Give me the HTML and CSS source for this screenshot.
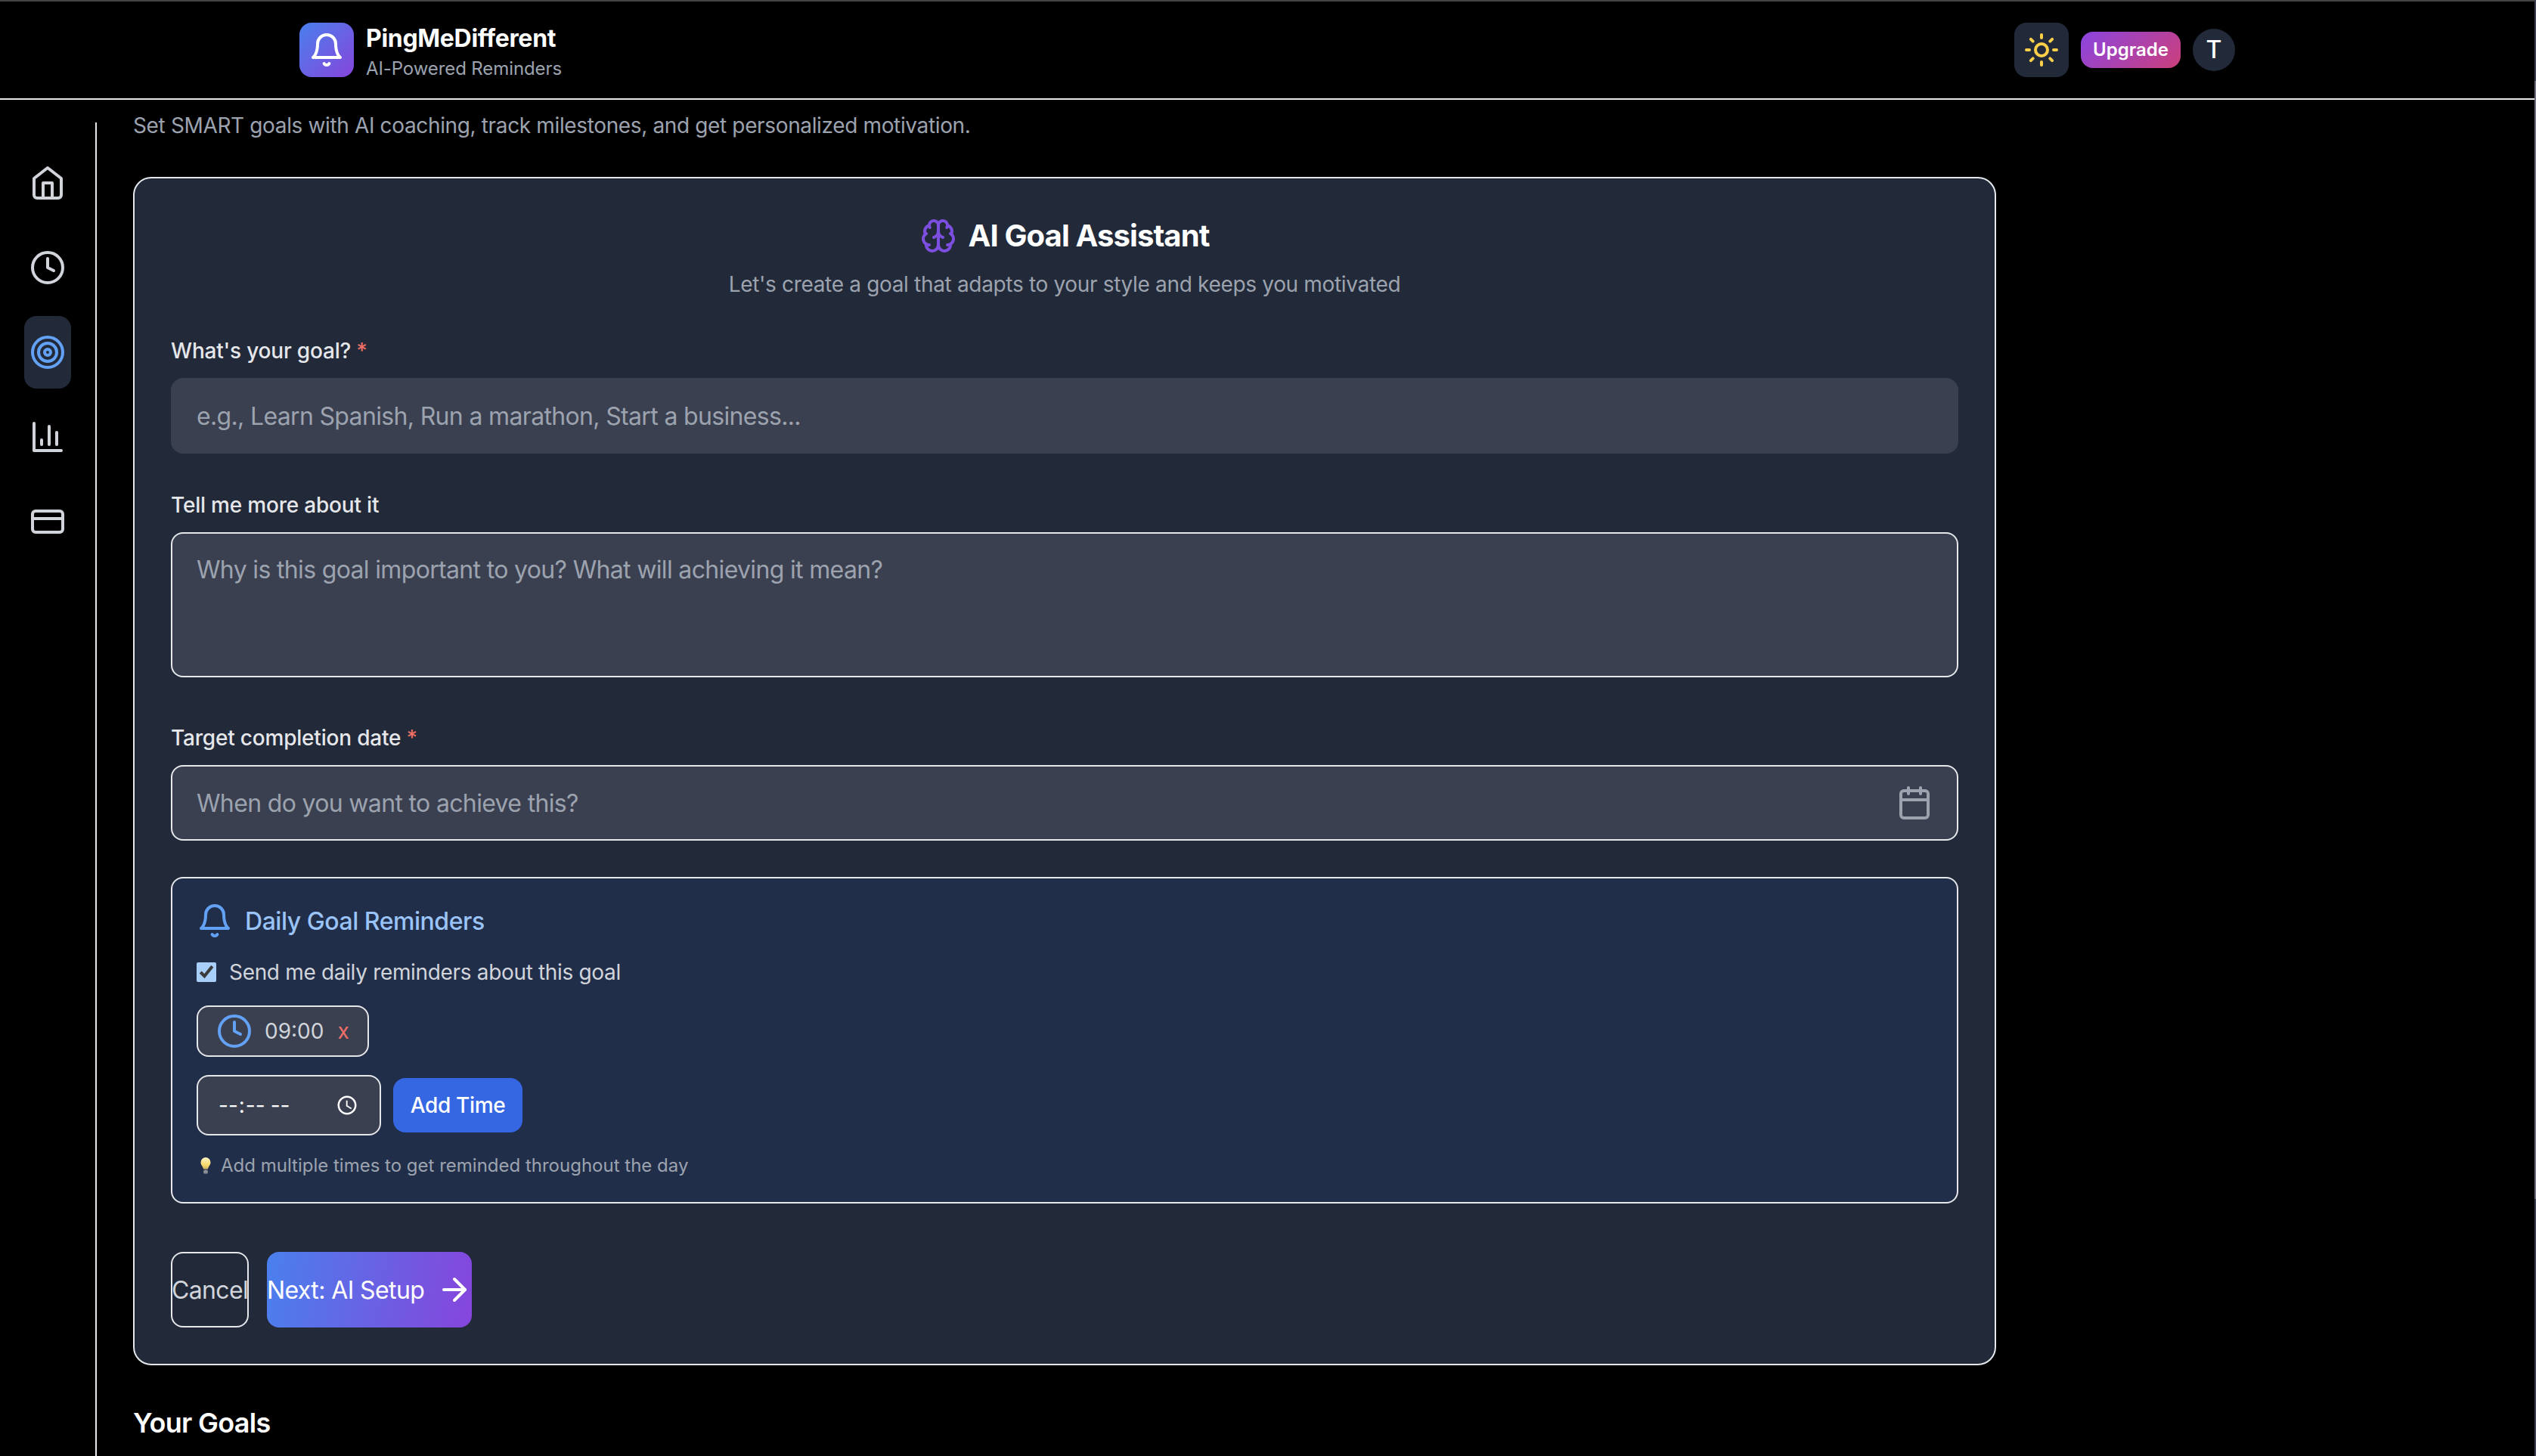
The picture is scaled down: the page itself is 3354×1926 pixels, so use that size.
FILE: index.html
```html
<!DOCTYPE html>
<html lang="en">
<head>
<meta charset="utf-8">
<title>PingMeDifferent</title>
<link rel="stylesheet" href="styles.css">
</head>
<body>
<header class="topbar">
  <div class="topbar-inner">
    <div class="brand">
      <span class="logo"><svg class="ic ic-white" viewBox="0 0 24 24"><path d="M6 8a6 6 0 0 1 12 0c0 7 3 9 3 9H3s3-2 3-9"/><path d="M10.3 21a1.94 1.94 0 0 0 3.4 0"/></svg></span>
      <div class="brand-text">
        <div class="brand-name">PingMeDifferent</div>
        <div class="brand-sub">AI-Powered Reminders</div>
      </div>
    </div>
    <div class="top-actions">
      <span class="theme-btn"><svg class="ic ic-yellow" viewBox="0 0 24 24"><circle cx="12" cy="12" r="4"/><path d="M12 2v2"/><path d="M12 20v2"/><path d="m4.93 4.93 1.41 1.41"/><path d="m17.66 17.66 1.41 1.41"/><path d="M2 12h2"/><path d="M20 12h2"/><path d="m6.34 17.66-1.41 1.41"/><path d="m19.07 4.93-1.41 1.41"/></svg></span>
      <span class="upgrade">Upgrade</span>
      <span class="avatar">T</span>
    </div>
  </div>
</header>
<div class="layout">
  <nav class="sidebar">
    <span class="nav-item"><svg class="ic" viewBox="0 0 24 24"><path d="m3 9 9-7 9 7v11a2 2 0 0 1-2 2H5a2 2 0 0 1-2-2z"/><polyline points="9 22 9 12 15 12 15 22"/></svg></span>
    <span class="nav-item"><svg class="ic" viewBox="0 0 24 24"><circle cx="12" cy="12" r="10"/><polyline points="12 6 12 12 16 14"/></svg></span>
    <span class="nav-item nav-active"><svg class="ic ic-blue" viewBox="0 0 24 24"><circle cx="12" cy="12" r="10"/><circle cx="12" cy="12" r="6"/><circle cx="12" cy="12" r="2"/></svg></span>
    <span class="nav-item"><svg class="ic" viewBox="0 0 24 24"><path d="M3 3v18h18"/><path d="M18 17V9"/><path d="M13 17V5"/><path d="M8 17v-3"/></svg></span>
    <span class="nav-item"><svg class="ic" viewBox="0 0 24 24"><rect x="2" y="5" width="20" height="14" rx="2"/><line x1="2" y1="10" x2="22" y2="10"/></svg></span>
  </nav>
  <main class="main">
    <p class="intro">Set SMART goals with AI coaching, track milestones, and get personalized motivation.</p>
    <section class="card">
      <h2 class="card-title"><svg class="ic ic-purple" viewBox="0 0 24 24"><path d="M12 5a3 3 0 1 0-5.997.125 4 4 0 0 0-2.526 5.77 4 4 0 0 0 .556 6.588A4 4 0 1 0 12 18Z"/><path d="M12 5a3 3 0 1 1 5.997.125 4 4 0 0 1 2.526 5.77 4 4 0 0 1-.556 6.588A4 4 0 1 1 12 18Z"/><path d="M15 13a4.5 4.5 0 0 1-3-4 4.5 4.5 0 0 1-3 4"/><path d="M17.599 6.5a3 3 0 0 0 .399-1.375"/><path d="M6.003 5.125A3 3 0 0 0 6.401 6.5"/><path d="M3.477 10.896a4 4 0 0 1 .585-.396"/><path d="M19.938 10.5a4 4 0 0 1 .585.396"/><path d="M6 18a4 4 0 0 1-1.967-.516"/><path d="M19.967 17.484A4 4 0 0 1 18 18"/></svg>AI Goal Assistant</h2>
      <p class="card-sub">Let's create a goal that adapts to your style and keeps you motivated</p>

      <label class="label">What's your goal? <span class="req">*</span></label>
      <input class="field field-plain" type="text" placeholder="e.g., Learn Spanish, Run a marathon, Start a business...">

      <label class="label">Tell me more about it</label>
      <textarea class="field field-area" placeholder="Why is this goal important to you? What will achieving it mean?"></textarea>

      <label class="label label-date">Target completion date <span class="req">*</span></label>
      <div class="date-wrap">
        <input class="field" type="text" placeholder="When do you want to achieve this?">
        <svg class="ic ic-gray date-icon" viewBox="0 0 24 24"><rect x="3" y="4" width="18" height="18" rx="2"/><path d="M16 2v4"/><path d="M8 2v4"/><path d="M3 10h18"/></svg>
      </div>

      <div class="reminders">
        <div class="rem-title"><svg class="ic ic-blue" viewBox="0 0 24 24"><path d="M6 8a6 6 0 0 1 12 0c0 7 3 9 3 9H3s3-2 3-9"/><path d="M10.3 21a1.94 1.94 0 0 0 3.4 0"/></svg>Daily Goal Reminders</div>
        <label class="rem-check"><input class="check" type="checkbox" checked>Send me daily reminders about this goal</label>
        <div class="chips">
          <span class="chip"><svg class="ic ic-blue" viewBox="0 0 24 24"><circle cx="12" cy="12" r="10"/><polyline points="12 6 12 12 16 14"/></svg><span class="chip-time">09:00</span><span class="chip-x">x</span></span>
        </div>
        <div class="time-row">
          <input class="time-input" type="time">
          <span class="add-time">Add Time</span>
        </div>
        <p class="tip"><svg class="bulb" viewBox="0 0 16 24"><defs><linearGradient id="bulbg" x1="0" y1="0" x2="0" y2="1"><stop offset="0" stop-color="#fff6c2"/><stop offset="0.65" stop-color="#f7d96b"/><stop offset="1" stop-color="#c9b060"/></linearGradient></defs><path d="M8 1a6.5 6.5 0 0 0-6.5 6.5c0 3.6 2.9 5.6 3.6 9h5.8c.7-3.4 3.6-5.4 3.6-9A6.5 6.5 0 0 0 8 1Z" fill="url(#bulbg)"/><rect x="5.2" y="17.5" width="5.6" height="5" rx="1.6" fill="#8d8f96"/></svg>Add multiple times to get reminded throughout the day</p>
      </div>

      <div class="actions">
        <span class="btn-cancel">Cancel</span>
        <span class="btn-next">Next: AI Setup<svg class="ic ic-white" viewBox="0 0 24 24"><path d="M5 12h14"/><path d="m12 5 7 7-7 7"/></svg></span>
      </div>
    </section>
    <h2 class="goals-title">Your Goals</h2>
  </main>
</div>
<div class="scroll-edge"><div class="scroll-thumb"></div></div>
</body>
</html>
```
FILE: styles.css
```css
* { box-sizing: border-box; }
html { margin: 0; padding: 0; height: 1926px; overflow: hidden; background: #000; }
body {
  margin: 0;
  padding: 0;
  background: #000;
  color: #fff;
  font-family: Inter, "Liberation Sans", sans-serif;
  overflow: hidden;
  height: 1926px;
  border-top: 2px solid #444;
}
.ic {
  width: 48px; height: 48px; flex: none; display: block;
  fill: none; stroke: #d1d5db; stroke-width: 2; stroke-linecap: round; stroke-linejoin: round;
}
.ic-white { stroke: #fff; }
.ic-yellow { stroke: #fbcf48; }
.ic-blue { stroke: #63a1f5; }
.ic-purple { stroke: #7c4fe0; }
.ic-gray { stroke: #9ca3af; }

.scroll-edge { position: fixed; top: 0; right: 0; bottom: 0; width: 2px; background: #3d4050; padding-top: 107px; }
.scroll-thumb { height: 1479px; background: #70707e; }

.topbar { height: 130px; border-bottom: 2px solid #e5e7eb; width: 3352px; }
.topbar-inner {
  width: 2560px; margin: 0 auto; height: 128px;
  display: flex; align-items: center; justify-content: space-between;
}
.brand { display: flex; align-items: center; gap: 16px; }
.logo {
  width: 72px; height: 72px; border-radius: 16px;
  background: linear-gradient(135deg, #4a80ed, #8645dc);
  display: flex; align-items: center; justify-content: center;
}
.brand-text { padding-top: 2px; }
.brand-name { font-size: 32px; line-height: 48px; font-weight: 700; letter-spacing: -0.3px; color: #fff; }
.brand-sub { font-size: 24px; line-height: 32px; letter-spacing: -0.1px; color: #9ca3af; }
.top-actions { display: flex; align-items: center; gap: 16px; }
.theme-btn {
  width: 72px; height: 72px; border-radius: 16px; background: #222938;
  display: flex; align-items: center; justify-content: center;
}
.upgrade {
  height: 48px; width: 132px; border-radius: 16px;
  background: linear-gradient(135deg, #8a45e0, #cc3f7a);
  font-size: 24px; font-weight: 600; line-height: 48px; text-align: center; color: #fff;
}
.avatar {
  width: 56px; height: 56px; border-radius: 50%; background: #222938;
  font-size: 32px; font-weight: 500; line-height: 56px; text-align: center; color: #fff;
}

.layout { display: flex; align-items: flex-start; height: 1794px; overflow: hidden; }
.sidebar {
  width: 128px; height: 1764px; margin-top: 30px; padding-top: 32px;
  border-right: 2px solid #e5e7eb;
  display: flex; flex-direction: column; align-items: center; gap: 16px;
}
.nav-item {
  width: 62px; height: 96px; border-radius: 16px;
  display: flex; align-items: center; justify-content: center;
}
.nav-active { background: #222938; }

.main { width: 2464px; margin-left: 48px; padding-top: 14px; }
.intro { margin: 0; font-size: 28px; line-height: 40px; letter-spacing: -0.36px; color: #9ca3af; }
.card {
  margin-top: 48px;
  height: 1572px;
  border: 2px solid #e5e7eb;
  border-radius: 24px;
  background: #222938;
  padding: 48px;
}
.card-title {
  margin: 0; display: flex; align-items: center; justify-content: center; gap: 16px;
  font-size: 40px; line-height: 56px; font-weight: 700; letter-spacing: -0.9px; color: #fff;
}
.card-sub { margin: 16px 0 0; text-align: center; font-size: 28px; line-height: 40px; letter-spacing: -0.33px; color: #9ca3af; }
.label { display: block; margin-top: 48px; font-size: 28px; line-height: 40px; font-weight: 500; letter-spacing: -0.2px; color: #e5e7eb; }
.label-date { margin-top: 60px; }
.req { color: #ee6f66; }
.field {
  display: block; width: 100%; height: 100px; margin-top: 16px;
  background: #3a4050; color: #fff;
  border: 2px solid #e5e7eb; border-radius: 16px;
  padding: 0 32px; outline: none;
  font-family: Inter, "Liberation Sans", sans-serif; font-size: 32px; line-height: 48px; letter-spacing: -0.66px;
}
.field::placeholder { color: #9ca3af; opacity: 1; }
.field-plain { border-color: #3a4050; }
.field-area { height: 192px; padding-top: 24px; padding-bottom: 24px; resize: none; }
.date-wrap { position: relative; }
.date-icon { position: absolute; right: 34px; top: 26px; }

.reminders {
  margin-top: 48px; height: 432px; padding: 32px;
  background: #212e4a; border: 2px solid #e5e7eb; border-radius: 16px;
}
.rem-title {
  display: flex; align-items: center; gap: 16px; height: 48px;
  font-size: 32px; font-weight: 500; letter-spacing: -0.46px; color: #9ac3f8;
}
.rem-check {
  display: flex; align-items: center; gap: 17px; margin-top: 24px;
  font-size: 28px; line-height: 40px; letter-spacing: -0.33px; color: #d1d5db;
}
.check { width: 26px; height: 26px; margin: 0; accent-color: #a8cffa; color-scheme: dark; }
.chips { margin-top: 24px; display: flex; }
.chip {
  height: 68px; width: 228px; padding: 0 24px;
  display: flex; align-items: center;
  background: #3a4050; border: 2px solid #e5e7eb; border-radius: 16px;
  font-size: 28px; color: #d1d5db;
}
.chip-time { margin-left: 16px; }
.chip-x { margin-left: 18px; color: #ee6f66; }
.time-row { margin-top: 24px; display: flex; align-items: center; gap: 16px; }
.time-input {
  width: 244px; height: 80px; padding: 0 28px 0 26px;
  background: #3a4050; color: #fff; color-scheme: dark;
  border: 2px solid #e5e7eb; border-radius: 16px; outline: none;
  font-family: Inter, "Liberation Sans", sans-serif; font-size: 28px; letter-spacing: 1.3px;
}
.time-input::-webkit-calendar-picker-indicator { width: 30px; height: 30px; margin: 0; padding: 0; }
.add-time {
  width: 171px; height: 72px; border-radius: 16px; background: #3567e3;
  font-size: 28px; font-weight: 500; line-height: 72px; letter-spacing: -0.35px; text-align: center; color: #fff;
}
.tip { margin: 24px 0 0; display: flex; align-items: center; gap: 12px; font-size: 24px; line-height: 32px; color: #9ca3af; }
.bulb { width: 16px; height: 24px; flex: none; margin-left: 4px; }

.actions { margin-top: 64px; display: flex; gap: 24px; }
.btn-cancel {
  width: 103px; height: 100px; border: 2px solid #e5e7eb; border-radius: 16px;
  display: flex; align-items: center; justify-content: center;
  font-size: 32px; letter-spacing: -0.66px; color: #d1d5db;
}
.btn-next {
  width: 271px; height: 100px; border-radius: 16px;
  background: linear-gradient(100deg, #4a80ed, #8645dc);
  display: flex; align-items: center; gap: 16px;
  font-size: 32px; font-weight: 400; letter-spacing: -0.6px; color: #fff; white-space: nowrap;
}
.goals-title { margin: 52px 0 0; font-size: 36px; line-height: 48px; font-weight: 600; letter-spacing: -0.7px; color: #fff; }
```
